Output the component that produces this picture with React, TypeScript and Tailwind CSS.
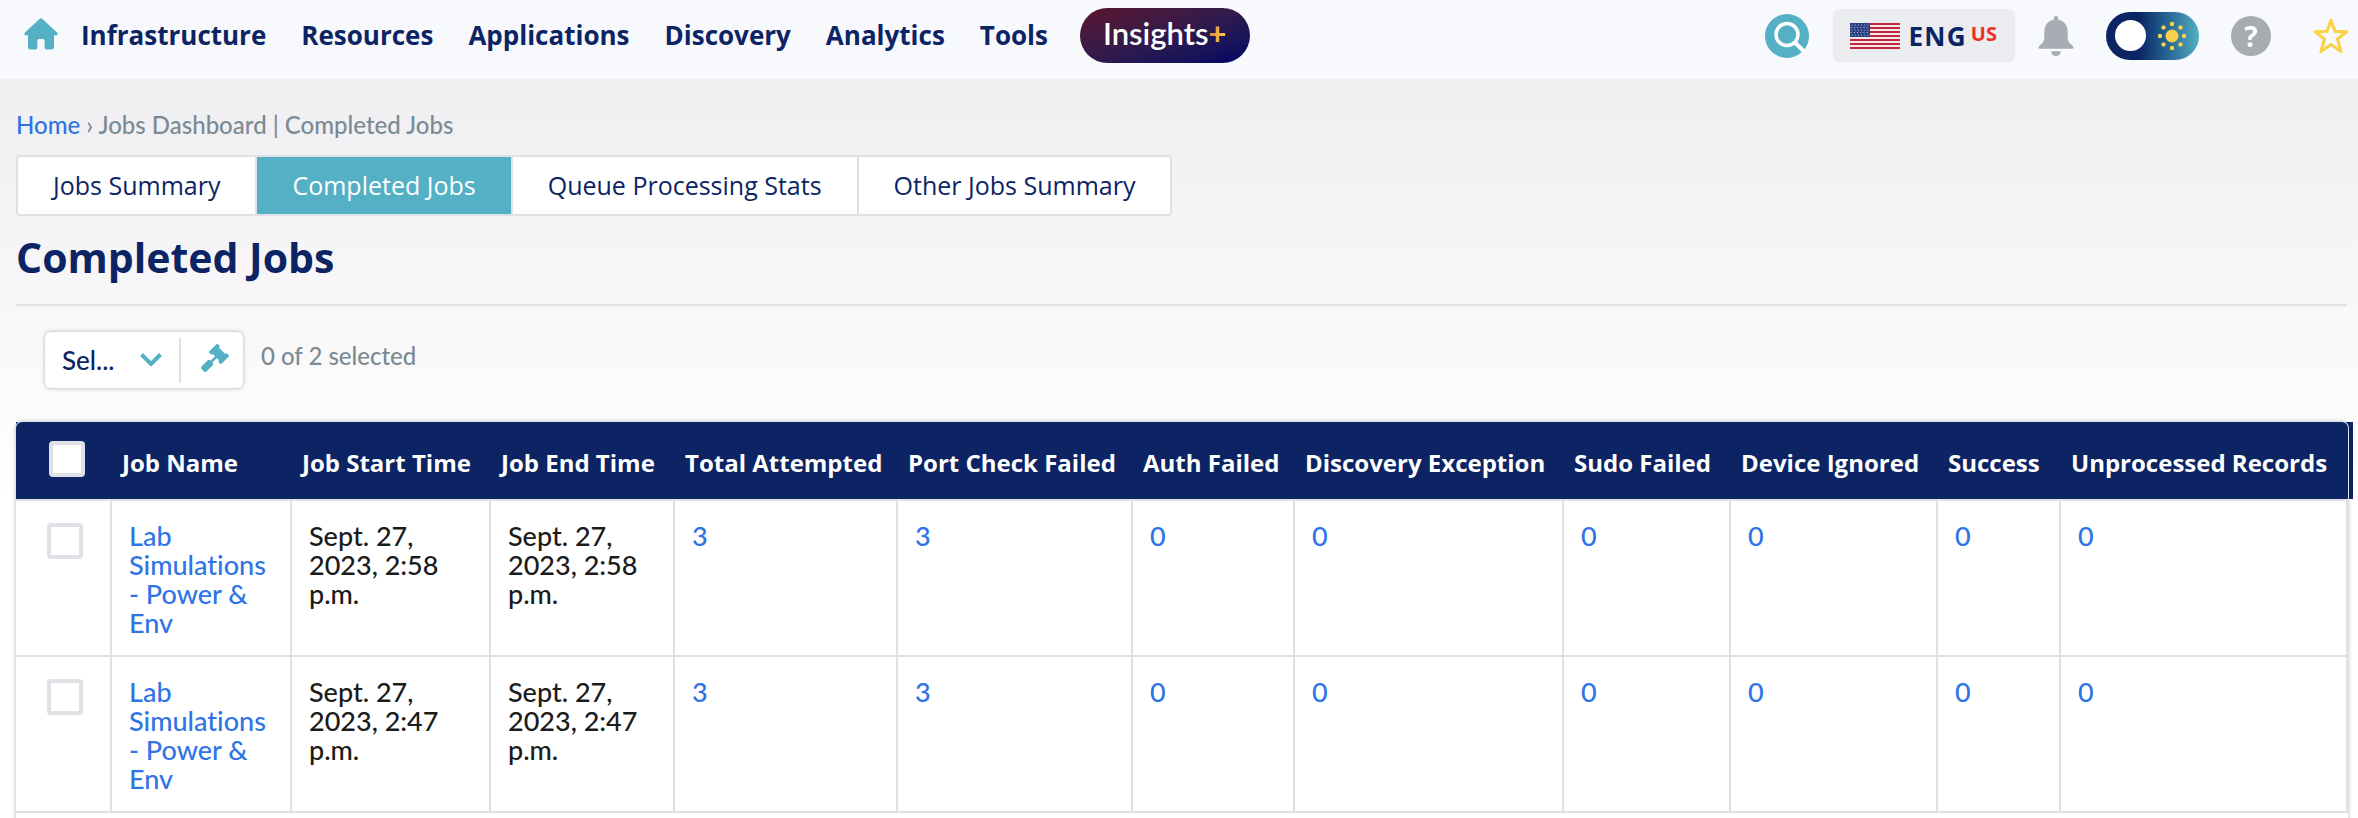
import React, { useState } from 'react';
import { FaGavel } from 'react-icons/fa';

const navLinks = ['Infrastructure', 'Resources', 'Applications', 'Discovery', 'Analytics', 'Tools'];

const tabs = ['Jobs Summary', 'Completed Jobs', 'Queue Processing Stats', 'Other Jobs Summary'];

const columns = [
    { title: 'Job Name', width: 'w-[180px]' },
    { title: 'Job Start Time', width: 'w-[199px]' },
    { title: 'Job End Time', width: 'w-[184px]' },
    { title: 'Total Attempted', width: 'w-[223px]' },
    { title: 'Port Check Failed', width: 'w-[235px]' },
    { title: 'Auth Failed', width: 'w-[162px]' },
    { title: 'Discovery Exception', width: 'w-[269px]' },
    { title: 'Sudo Failed', width: 'w-[167px]' },
    { title: 'Device Ignored', width: 'w-[207px]' },
    { title: 'Success', width: 'w-[123px]' },
    { title: 'Unprocessed Records', width: 'w-[287px]' },
];

const jobs = [
    {
        id: 1,
        name: 'Lab Simulations - Power & Env',
        start: 'Sept. 27, 2023, 2:58 p.m.',
        end: 'Sept. 27, 2023, 2:58 p.m.',
        counts: [3, 3, 0, 0, 0, 0, 0, 0],
    },
    {
        id: 2,
        name: 'Lab Simulations - Power & Env',
        start: 'Sept. 27, 2023, 2:47 p.m.',
        end: 'Sept. 27, 2023, 2:47 p.m.',
        counts: [3, 3, 0, 0, 0, 0, 0, 0],
    },
];

const HomeIcon = () => (
    <svg viewBox="0 0 34 32" className="h-8 w-[34px]" fill="#54b0c4">
        <path d="M15.5 1 1 14.600c-1.200 1.200-.7 2.600.8 2.600H4V29c0 1.600.8 2.400 2.400 2.400h5c1.300 0 2-.7 2-2V23c0-1.300.7-2 2-2h3.200c1.300 0 2 .7 2 2v6.400c0 1.300.7 2 2 2h5c1.600 0 2.400-.8 2.400-2.400V17.200h2.200c1.500 0 2-1.400.8-2.600L18.500 1c-1-.9-2-.9-3 0z" />
    </svg>
);

const SearchIcon = () => (
    <svg viewBox="0 0 44 44" className="size-11">
        <circle cx="22" cy="22" r="22" fill="#54b0c4" />
        <circle cx="22" cy="20.500" r="11" fill="none" stroke="#fff" strokeWidth="3.500" />
        <path d="M29.500 28 39 37.500" stroke="#fff" strokeWidth="4" />
    </svg>
);

const FlagIcon = () => (
    <svg viewBox="0 0 50 26" className="h-[26px] w-[50px]">
        <rect width="50" height="26" fill="#f5e6ea" />
        {[0, 4, 8, 12, 16, 20, 24].map((y) => (
            <rect key={y} y={y} width="50" height="2" fill="#c0293f" />
        ))}
        <rect width="20" height="14" fill="#2b4180" />
        {[2, 4.5, 7, 9.5, 12].map((y, row) =>
            [2, 5.2, 8.4, 11.6, 14.8, 18].map((x) => (
                <circle key={`${x}-${y}`} cx={row % 2 ? x - 0.8 : x} cy={y} r="0.6" fill="#c3cbe2" />
            ))
        )}
    </svg>
);

const BellIcon = () => (
    <svg viewBox="0 0 36 40" className="h-10 w-9" fill="#a7abb2">
        <path d="M18 0c-1.300 0-2.200.9-2.200 2.200v1.300C9.800 4.800 6.300 9.500 6.300 16v5c0 4-1.500 6.300-4.600 8.500C.6 30.300.5 31 .5 31.500c0 .8.500 1.200 1.300 1.200h32.400c.8 0 1.300-.4 1.300-1.200 0-.5-.1-1.200-1.200-2C31.200 27.300 29.700 25 29.700 21v-5c0-6.500-3.500-11.200-9.500-12.500V2.200C20.200.9 19.300 0 18 0z" />
        <path d="M13 35.300h10c-.3 3-2.300 4.700-5 4.700s-4.700-1.700-5-4.700z" />
    </svg>
);

const SunIcon = () => (
    <svg viewBox="0 0 30 30" className="size-[30px]" fill="#fad14b">
        <circle cx="15" cy="15" r="6.500" />
        {[0, 45, 90, 135, 180, 225, 270, 315].map((deg) => (
            <circle key={deg} cx="15" cy="3" r="2.200" transform={`rotate(${deg} 15 15)`} />
        ))}
    </svg>
);

const StarIcon = () => (
    <svg viewBox="0 0 36 36" className="size-9" fill="none" stroke="#fad14b" strokeWidth="3.200" strokeLinejoin="round">
        <path d="M18 2.500 22 13.300 33.800 13.800 24.500 21 28 33.500 18 26.500 8 33.500 11.500 21 2.200 13.800 14 13.300z" />
    </svg>
);

const checkboxStyle = 'block size-9 appearance-none rounded border-4 border-[#dee2e6] bg-white checked:bg-[#54b0c4]';

const Header = () => {
    const [light, setLight] = useState(true);

    return (
        <header className="flex h-[79px] items-start justify-between bg-[#f8f9fc] pr-[9px] pl-6 font-['Open_Sans',sans-serif] text-[#0c2464]">
            <nav className="flex items-center pt-2">
                <a href="#home" aria-label="Home" className="mr-[23px] pb-1">
                    <HomeIcon />
                </a>
                <div className="flex h-[55px] items-center gap-[35px] text-[26px] font-bold">
                    {navLinks.map((link) => (
                        <a key={link} href={`#${link.toLowerCase()}`}>
                            {link}
                        </a>
                    ))}
                </div>
                <a
                    href="#insights"
                    className="ml-8 flex h-[55px] items-center rounded-full bg-linear-to-br from-[#5e0f2e] to-[#000066] px-[23px] pb-1 font-['Lato',sans-serif] text-[31px] font-semibold text-white"
                >
                    Insights
                    <span className="bg-linear-to-r from-[#e08a3c] to-[#fad14b] bg-clip-text font-black text-transparent">+</span>
                </a>
            </nav>

            <div className="flex items-center pt-[9px]">
                <button type="button" aria-label="Search" className="mr-6">
                    <SearchIcon />
                </button>
                <button type="button" className="mr-[23px] flex h-[53px] items-center rounded-md bg-[#ebecf0] pr-[18px] pl-[17px]">
                    <FlagIcon />
                    <span className="ml-2 pt-[2px] text-[26px] font-bold tracking-wider">ENG</span>
                    <span className="ml-1 pb-1 text-xl font-bold text-[#ee3124]">US</span>
                </button>
                <button type="button" aria-label="Notifications" className="mr-8">
                    <BellIcon />
                </button>
                <button
                    type="button"
                    role="switch"
                    aria-checked={light}
                    aria-label="Light theme"
                    onClick={() => setLight(!light)}
                    className="mr-8 flex h-12 w-[93px] items-center justify-between rounded-full bg-linear-to-r from-[#0c2464] from-35% to-[#54b0c4] pr-3 pl-[9px]"
                >
                    <span className="size-[31px] rounded-full bg-white" />
                    <SunIcon />
                </button>
                <button type="button" aria-label="Help" className="mr-[42px] flex size-10 items-center justify-center rounded-full bg-[#a7abb2] text-[28px] font-bold text-white">
                    ?
                </button>
                <button type="button" aria-label="Favorite">
                    <StarIcon />
                </button>
            </div>
        </header>
    );
};

const Actions = () => (
    <div className="flex items-start gap-[18px] pt-[26px] pb-[34px] pl-[29px]">
        <div className="flex h-[56px] items-center rounded-md bg-white shadow-[0_0_4px_rgba(0,0,0,0.3)]">
            <div className="relative flex items-center">
                <select aria-label="Action" className="w-[134px] appearance-none bg-transparent pl-[17px] text-[26px] font-medium text-[#0c2464] outline-none">
                    <option>Sel...</option>
                </select>
                <svg viewBox="0 0 22 14" className="pointer-events-none absolute right-[17px] h-[14px] w-[22px]" fill="none" stroke="#54b0c4" strokeWidth="4">
                    <path d="M1.500 1.500 11 11 20.500 1.500" />
                </svg>
            </div>
            <span className="h-[45px] w-[2px] bg-[#dee2e6]" />
            <button type="button" aria-label="Run action" className="pr-[14px] pb-1 pl-5 text-[#54b0c4]">
                <FaGavel className="size-7" />
            </button>
        </div>
        <span className="pt-2 text-2xl font-medium text-[#7b8a93]">0 of 2 selected</span>
    </div>
);

const JobsTable = () => {
    const [selected, setSelected] = useState<number[]>([]);

    const toggle = (id: number) => {
        setSelected((prev) => (prev.includes(id) ? prev.filter((item) => item !== id) : [...prev, id]));
    };

    return (
        <div className="bg-[linear-gradient(#0c2464,#0c2464)] bg-[length:100%_77px] bg-no-repeat pr-[5px]">
            <div className="overflow-hidden rounded-t-md bg-white pb-10 shadow-[0_0_4px_rgba(0,0,0,0.3)] ring-1 ring-[#dee2e6]">
                <table className="w-full table-fixed border-separate border-spacing-0 text-left">
                    <thead className="bg-[#0c2464] font-['Open_Sans',sans-serif] text-2xl text-white">
                        <tr className="h-[79px]">
                            <th className="w-[96px] border-b-2 border-[#dee2e6] pb-1 pl-[33px]">
                                <input
                                    type="checkbox"
                                    aria-label="Select all jobs"
                                    className={checkboxStyle}
                                    checked={selected.length === jobs.length}
                                    onChange={(e) => setSelected(e.target.checked ? jobs.map((job) => job.id) : [])}
                                />
                            </th>
                            {columns.map((column) => (
                                <th key={column.title} className={`${column.width} border-b-2 border-[#dee2e6] pt-1 pl-[10px] font-bold whitespace-nowrap`}>
                                    {column.title}
                                </th>
                            ))}
                        </tr>
                    </thead>
                    <tbody className="align-top text-[27px] leading-[29px] font-medium">
                        {jobs.map((job) => (
                            <tr key={job.id} className="h-[156px]">
                                <td className="border-r-2 border-b-2 border-[#dee2e6] pt-[22px] pl-[31px]">
                                    <input
                                        type="checkbox"
                                        aria-label={`Select job ${job.id}`}
                                        className={checkboxStyle}
                                        checked={selected.includes(job.id)}
                                        onChange={() => toggle(job.id)}
                                    />
                                </td>
                                <td className="border-r-2 border-b-2 border-[#dee2e6] pt-5 pr-4 pl-[17px]">
                                    <a href={`#job-${job.id}`} className="text-[#2f74e6]">
                                        {job.name}
                                    </a>
                                </td>
                                <td className="border-r-2 border-b-2 border-[#dee2e6] pt-5 pr-4 pl-[17px]">{job.start}</td>
                                <td className="border-r-2 border-b-2 border-[#dee2e6] pt-5 pr-4 pl-[17px]">{job.end}</td>
                                {job.counts.map((count, i) => (
                                    <td key={i} className="border-r-2 border-b-2 border-[#dee2e6] pt-5 pl-[17px]">
                                        <a href={`#job-${job.id}-${i}`} className="text-[#2f74e6]">
                                            {count}
                                        </a>
                                    </td>
                                ))}
                            </tr>
                        ))}
                    </tbody>
                </table>
            </div>
        </div>
    );
};

const App = () => {
    const [activeTab, setActiveTab] = useState('Completed Jobs');

    return (
        <div className="h-screen overflow-hidden bg-white font-['Lato',sans-serif] text-[#1b1b1b] [font-variant-ligatures:none]">
            <Header />
            <main className="bg-linear-to-b from-[#efeff2] to-white to-[420px] pt-8 pr-[5px] pl-4">
                <div className="text-2xl leading-7 font-medium text-[#7b8a93]">
                    <a href="#home" className="text-[#2f74e6]">
                        Home
                    </a>{' '}
                    › Jobs Dashboard | Completed Jobs
                </div>

                <div className="mt-4 flex w-fit divide-x-2 divide-[#dee2e6] rounded border-2 border-[#dee2e6] bg-white font-['Open_Sans',sans-serif] text-[25px] font-medium">
                    {tabs.map((tab) => (
                        <button
                            key={tab}
                            type="button"
                            onClick={() => setActiveTab(tab)}
                            className={`h-[57px] px-[35px] ${tab === activeTab ? 'bg-[#54b0c4] text-white' : 'text-[#0c2464]'}`}
                        >
                            {tab}
                        </button>
                    ))}
                </div>

                <h1 className="mr-[6px] border-b-2 border-[#dee2e6] pt-[14px] pb-5 font-['Open_Sans',sans-serif] text-[41px] leading-[54px] font-bold text-[#0c2464]">Completed Jobs</h1>

                <Actions />
                <JobsTable />
            </main>
        </div>
    );
};

export default App;
